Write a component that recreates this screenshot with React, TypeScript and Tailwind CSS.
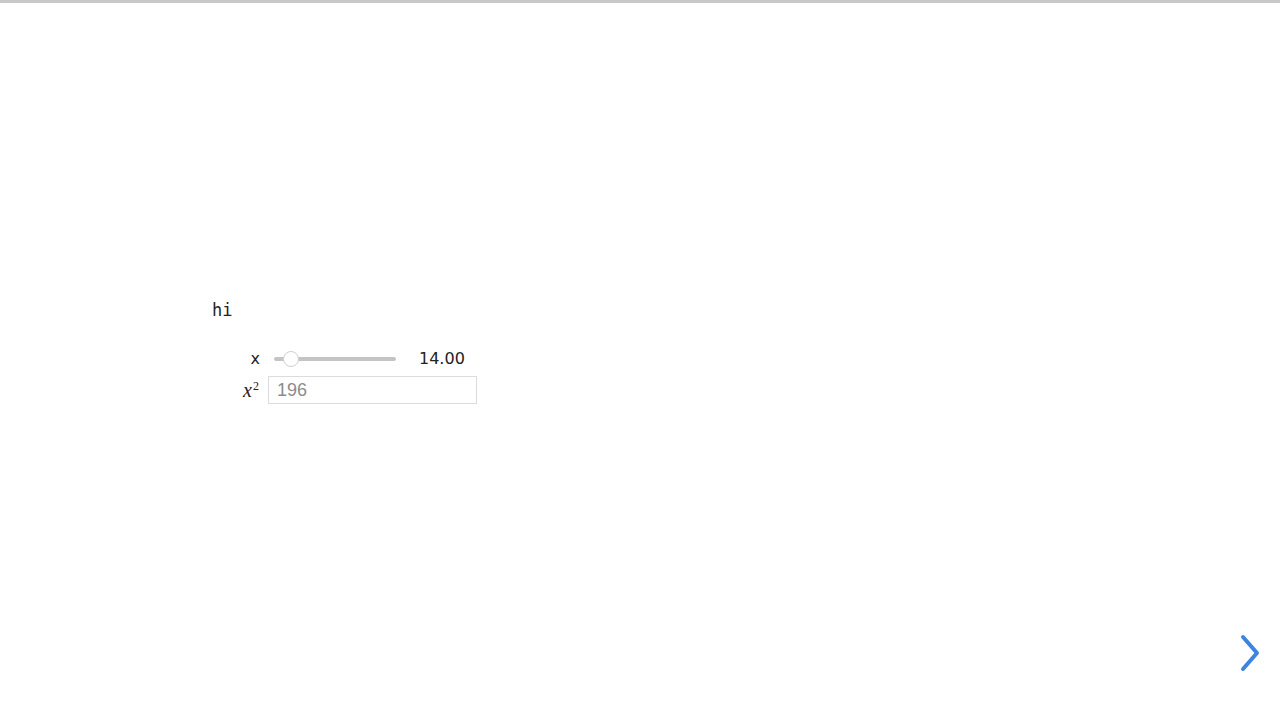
const App = () => {
  return (
    <div className="relative min-h-[720px] w-full bg-white border-t-[3px] border-[#c8c8c8]">
      <div className="flex flex-col pl-[212px] pt-[295px]">
        <div className="text-[17px] leading-6 text-[#222] font-['DejaVu_Sans_Mono',monospace]">hi</div>

        <div className="mt-[27px] flex flex-col gap-[7px] font-['DejaVu_Sans',sans-serif]">
          {/* slider row */}
          <div className="flex items-center h-[20px]">
            <div className="w-[56px] pr-[8px] text-right text-[16px] text-[#222]">x</div>
            <div className="relative w-[122px] h-[20px] ml-[6px] flex items-center">
              <div className="w-full h-[4px] rounded-full bg-[#c4c4c4]" />
              <div className="absolute left-[9px] top-[2px] w-[16px] h-[16px] rounded-full bg-white border border-[#cfcfcf]" />
            </div>
            <div className="ml-[23px] text-[16px] text-[#222]">14.00</div>
          </div>

          {/* input row */}
          <div className="flex items-center">
            <div className="w-[56px] pr-[9px] text-right text-[#222] font-['Liberation_Serif',serif] leading-none">
              <span className="italic text-[20px]">x</span>
              <span className="relative -top-[7px] ml-[1px] text-[12px]">2</span>
            </div>
            <input
              type="text"
              placeholder="196"
              readOnly
              className="w-[209px] h-[28px] px-[8px] border border-[#dcdcdc] text-[18px] text-[#222] placeholder:text-[#8c8c8c] outline-none font-['Liberation_Sans',sans-serif]"
            />
          </div>
        </div>
      </div>

      {/* next arrow */}
      <button className="absolute left-[1236px] top-[628px] w-[28px] h-[44px] flex items-center justify-center">
        <svg width="24" height="40" viewBox="0 0 24 40" fill="none">
          <path d="M5 4 L19 20 L5 36" stroke="#3c84e0" strokeWidth="4" strokeLinecap="round" strokeLinejoin="round" />
        </svg>
      </button>
    </div>
  );
};

export default App;
